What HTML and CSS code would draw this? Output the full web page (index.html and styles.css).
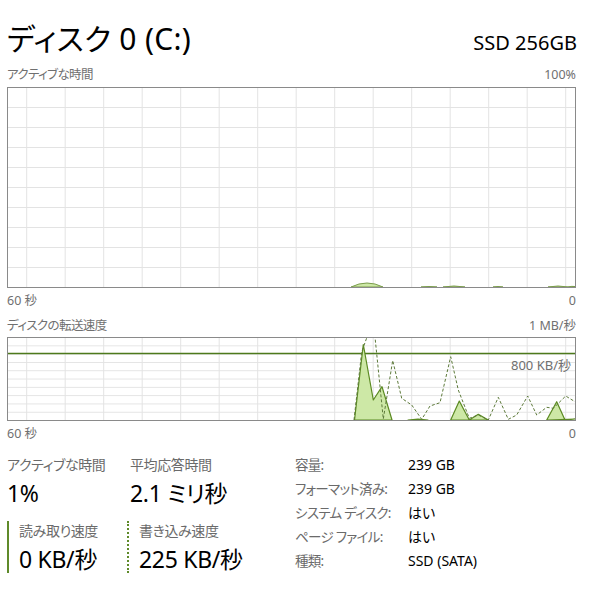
FILE: index.html
```html
<!DOCTYPE html>
<html lang="ja">
<head>
    <meta charset="UTF-8">
    <title>ディスク 0 (C:)</title>
    <link rel="stylesheet" href="styles.css">
</head>
<body>
    <div class="panel">
        <div class="head">
            <h1 class="title">ディスク 0 (C:)</h1>
            <div class="model">SSD 256GB</div>
        </div>

        <div class="axis first"><span class="jp">アクティブな時間</span><span>100%</span></div>
        <div class="chart chart-active">
            <svg width="567" height="199" viewBox="0 0 567 199">
                <g class="read soft">
                    <path d="M343 199 Q359 191 375 199 Z"/>
                    <path d="M413 199 Q421 198 429 199 Z"/>
                    <path d="M435 199 Q446 197 457 199 Z"/>
                    <path d="M485 199 Q490 198 495 199 Z"/>
                    <path d="M540 199 Q550 197 560 199 Z"/>
                    <path d="M560 199 Q564 198 567 198.5 Z"/>
                </g>
            </svg>
        </div>
        <div class="axis"><span>60 秒</span><span>0</span></div>

        <div class="axis gap"><span class="jp">ディスクの転送速度</span><span>1 MB/秒</span></div>
        <div class="chart chart-rate">
            <svg width="567" height="82" viewBox="0 0 567 82">
                <line class="limit" x1="0" y1="15.5" x2="567" y2="15.5"/>
                <g class="read">
                    <path d="M346.5 82 L355.3 6.5 L365.3 62 L374 48.7 L384 82 Z"/>
                    <path d="M442.7 82 L451.3 63 L461.3 82 L470.3 76.3 L480.3 82 Z"/>
                    <path d="M538.7 82 L548.7 63.7 L557 82 L567 81 Z"/>
                    <path d="M400 82 L410 81 L420 82 Z"/>
                </g>
                <path class="write" d="M346 82 L353.7 14 L359 -1 L367 -1 L375.3 81 L384.7 22.5 L393.7 60.3 L403.7 67 L413.7 81.3 L422 68 L432 64.7 L442.7 18.7 L450.3 52 L461.3 80.3 L470.3 77 L480.3 82 L490.3 59.3 L500.3 81.3 L508.7 77 L519.7 58 L528.7 77 L538.7 69.3 L545.3 70.3 L557.7 58 L567 63.7"/>
            </svg>
            <span class="mark">800 KB/秒</span>
        </div>
        <div class="axis"><span>60 秒</span><span>0</span></div>

        <div class="stats">
            <div class="stat-grid">
                <div class="stat">
                    <div class="stat-label">アクティブな時間</div>
                    <div class="stat-value">1%</div>
                </div>
                <div class="stat second">
                    <div class="stat-label">平均応答時間</div>
                    <div class="stat-value">2.1 ミリ秒</div>
                </div>
                <div class="stat speed read-speed">
                    <div class="stat-label">読み取り速度</div>
                    <div class="stat-value">0 KB/秒</div>
                </div>
                <div class="stat speed write-speed">
                    <div class="stat-label">書き込み速度</div>
                    <div class="stat-value">225 KB/秒</div>
                </div>
            </div>
            <dl class="info">
                <dt>容量:</dt><dd>239 GB</dd>
                <dt>フォーマット済み:</dt><dd>239 GB</dd>
                <dt>システム ディスク:</dt><dd>はい</dd>
                <dt>ページ ファイル:</dt><dd>はい</dd>
                <dt>種類:</dt><dd>SSD (SATA)</dd>
            </dl>
        </div>
    </div>
</body>
</html>
```

FILE: styles.css
```css
body {
    margin: 0;
    background: #fff;
    font-family: "Noto Sans", "Noto Sans CJK JP", sans-serif;
    font-feature-settings: "palt";
    color: #000;
}
.panel {
    width: 569px;
    padding: 21px 0 0 7px;
}
.head {
    display: flex;
    justify-content: space-between;
    align-items: baseline;
    height: 36px;
}
.title {
    margin: 0;
    font-size: 30px;
    font-weight: normal;
    line-height: 36px;
    letter-spacing: 0.3px;
}
.model {
    font-size: 20px;
    line-height: 36px;
    margin-right: -1px;
}
.axis {
    display: flex;
    justify-content: space-between;
    font-size: 12.5px;
    line-height: 16px;
    color: #707070;
    margin-top: 5px;
}
.axis .jp {
    letter-spacing: -0.6px;
}
.axis.first {
    margin-top: 10px;
}
.axis.gap {
    margin-top: 9px;
}
.chart {
    position: relative;
    border: 1px solid #8a8a8a;
    margin-top: 4px;
    background-color: #fff;
    background-image:
        linear-gradient(to right, #e3e3e3 1px, transparent 1px),
        linear-gradient(to bottom, #e3e3e3 1px, transparent 1px);
}
.chart svg {
    display: block;
}
.chart-active {
    height: 199px;
    background-size: 38.5px 20px;
    background-position: 18.2px 19px;
}
.chart-rate {
    height: 82px;
    margin-top: 3px;
    background-size: 38.5px 8.3px;
    background-position: 18.2px 7.4px;
}
.read path {
    fill: #cde8a6;
    stroke: #5b8a22;
    stroke-width: 1.2;
    stroke-linejoin: round;
}
.read.soft path {
    stroke-width: 1;
    stroke: #7a9c4c;
}
.write {
    fill: none;
    stroke: #5d7a3a;
    stroke-width: 1;
    stroke-dasharray: 3 2;
}
.limit {
    stroke: #4d7a1c;
    stroke-width: 1.4;
}
.mark {
    position: absolute;
    right: 4px;
    top: 19px;
    font-size: 13px;
    line-height: 16px;
    color: #707070;
}
.stats {
    display: flex;
    margin-top: 11px;
}
.stat-grid {
    width: 288px;
    display: grid;
    grid-template-columns: 120px auto;
    row-gap: 13px;
    padding-top: 2px;
}
.stat-label {
    font-size: 14px;
    line-height: 20px;
    color: #6a6a6a;
    letter-spacing: -0.4px;
}
.stat-value {
    font-size: 23px;
    line-height: 28px;
    margin-top: 4px;
    letter-spacing: -0.3px;
}
.second {
    padding-left: 3px;
}
.speed {
    padding-left: 10px;
}
.read-speed {
    border-left: 2px solid #5f8a2a;
}
.write-speed {
    border-left: 2px dotted #5f8a2a;
}
.info {
    display: grid;
    grid-template-columns: 113px auto;
    margin: 0;
    font-size: 14px;
    line-height: 24px;
}
.info dt {
    color: #6a6a6a;
    font-size: 13.5px;
    letter-spacing: -0.7px;
}
.info dd {
    margin: 0;
}
```
